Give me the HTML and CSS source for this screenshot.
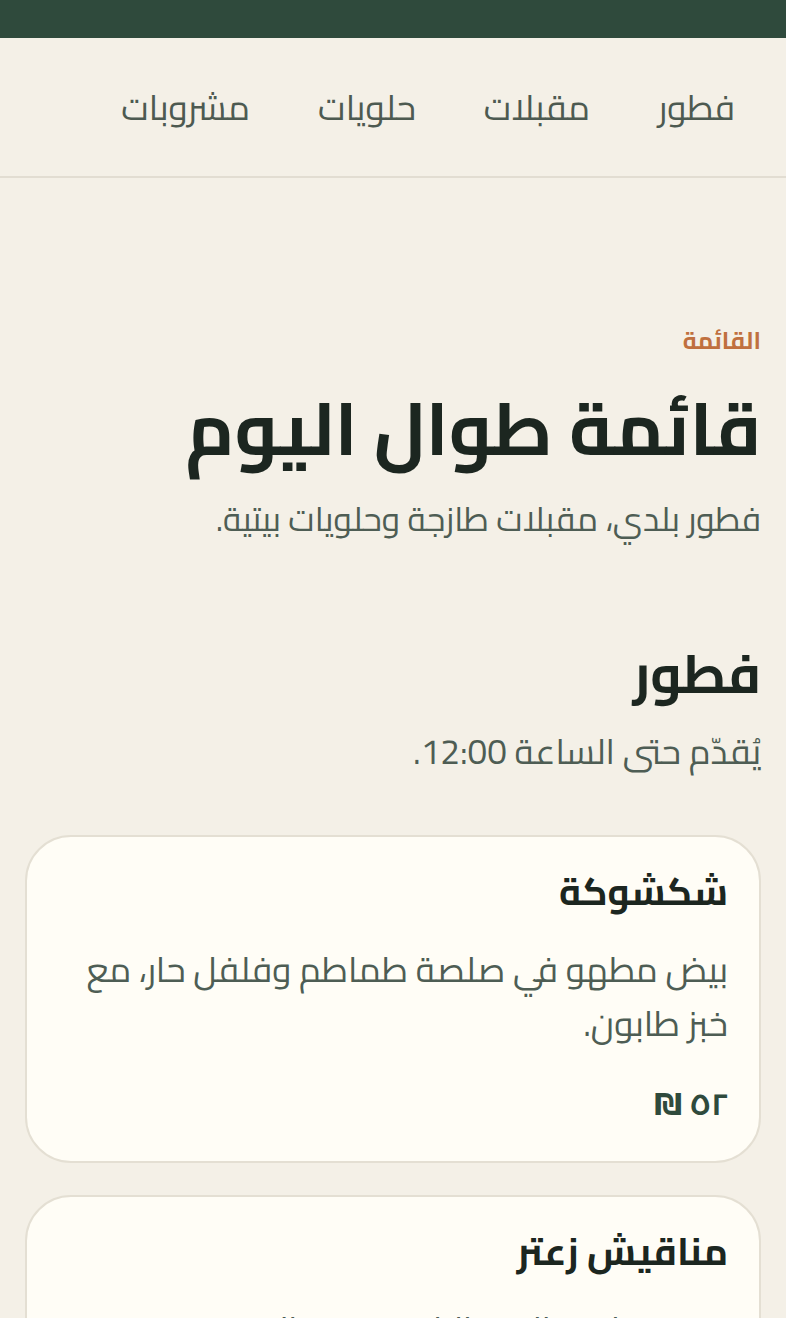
FILE: index.html
```html
<!DOCTYPE html>
<html lang="ar" dir="rtl">
<head>
<meta charset="utf-8">
<title>القائمة</title>
<link rel="stylesheet" href="styles.css">
</head>
<body>
<div class="topbar"></div>
<nav class="nav">
  <a class="nav-link" href="#">فطور</a>
  <a class="nav-link" href="#">مقبلات</a>
  <a class="nav-link" href="#">حلويات</a>
  <a class="nav-link" href="#">مشروبات</a>
</nav>
<main class="main">
  <header class="hero">
    <p class="eyebrow">القائمة</p>
    <h1 class="title">قائمة طوال اليوم</h1>
    <p class="lead">فطور بلدي، مقبلات طازجة وحلويات بيتية.</p>
  </header>
  <section class="section">
    <h2 class="section-title">فطور</h2>
    <p class="section-note">يُقدّم حتى الساعة 12:00.</p>
    <div class="cards">
      <article class="card">
        <h3 class="card-title">شكشوكة</h3>
        <p class="card-desc">بيض مطهو في صلصة طماطم وفلفل حار، مع خبز طابون.</p>
        <p class="price">٥٢ ₪</p>
      </article>
      <article class="card">
        <h3 class="card-title">مناقيش زعتر</h3>
        <p class="card-desc">عجينة طرية بالزعتر البلدي وزيت الزيتون.</p>
        <p class="price">٣٥ ₪</p>
      </article>
    </div>
  </section>
</main>
</body>
</html>
```
FILE: styles.css
```css
* { box-sizing: border-box; }
html, body { margin: 0; padding: 0; }
body {
  background: #f4f0e7;
  font-family: "Cairo", "Noto Kufi Arabic", "Noto Sans Arabic", "DejaVu Sans", sans-serif;
  color: #1c2620;
}
.topbar { height: 38px; background: #2f4a3c; }
.nav {
  height: 140px;
  border-bottom: 2px solid #e2ddd2;
  display: flex;
  align-items: center;
  gap: 68px;
  padding: 0 51px;
}
.nav-link {
  font-size: 35px;
  font-weight: 400;
  color: #4d5a51;
  text-decoration: none;
  line-height: 50px;
}
.main { padding: 0 25px; }
.hero { padding-top: 145px; }
.eyebrow {
  margin: 0;
  font-size: 24px;
  font-weight: 700;
  color: #c0703f;
  line-height: 36px;
}
.title {
  margin: 24px 0 0;
  font-size: 74px;
  font-weight: 700;
  line-height: 90px;
}
.lead {
  margin: 23px 0 0;
  font-size: 33.5px;
  font-weight: 400;
  color: #4e5d54;
  line-height: 46px;
}
.section { padding-top: 97px; }
.section-title {
  margin: 0;
  font-size: 54px;
  font-weight: 700;
  line-height: 70px;
}
.section-note {
  margin: 19px 0 0;
  font-size: 35px;
  font-weight: 400;
  color: #4e5d54;
  line-height: 46px;
}
.cards {
  margin-top: 61px;
  display: flex;
  flex-direction: column;
  gap: 32px;
}
.card {
  background: #fffdf6;
  border: 2px solid #e4dfd3;
  border-radius: 46px;
  padding: 27px 31px 35px;
}
.card-title {
  margin: 0;
  font-size: 38px;
  font-weight: 700;
  line-height: 54px;
}
.card-desc {
  margin: 24px 0 0;
  font-size: 35px;
  font-weight: 400;
  color: #4e5d54;
  line-height: 54px;
}
.price {
  margin: 32px 0 0;
  font-size: 31px;
  font-weight: 700;
  color: #2f4a3c;
  line-height: 44px;
}
```
